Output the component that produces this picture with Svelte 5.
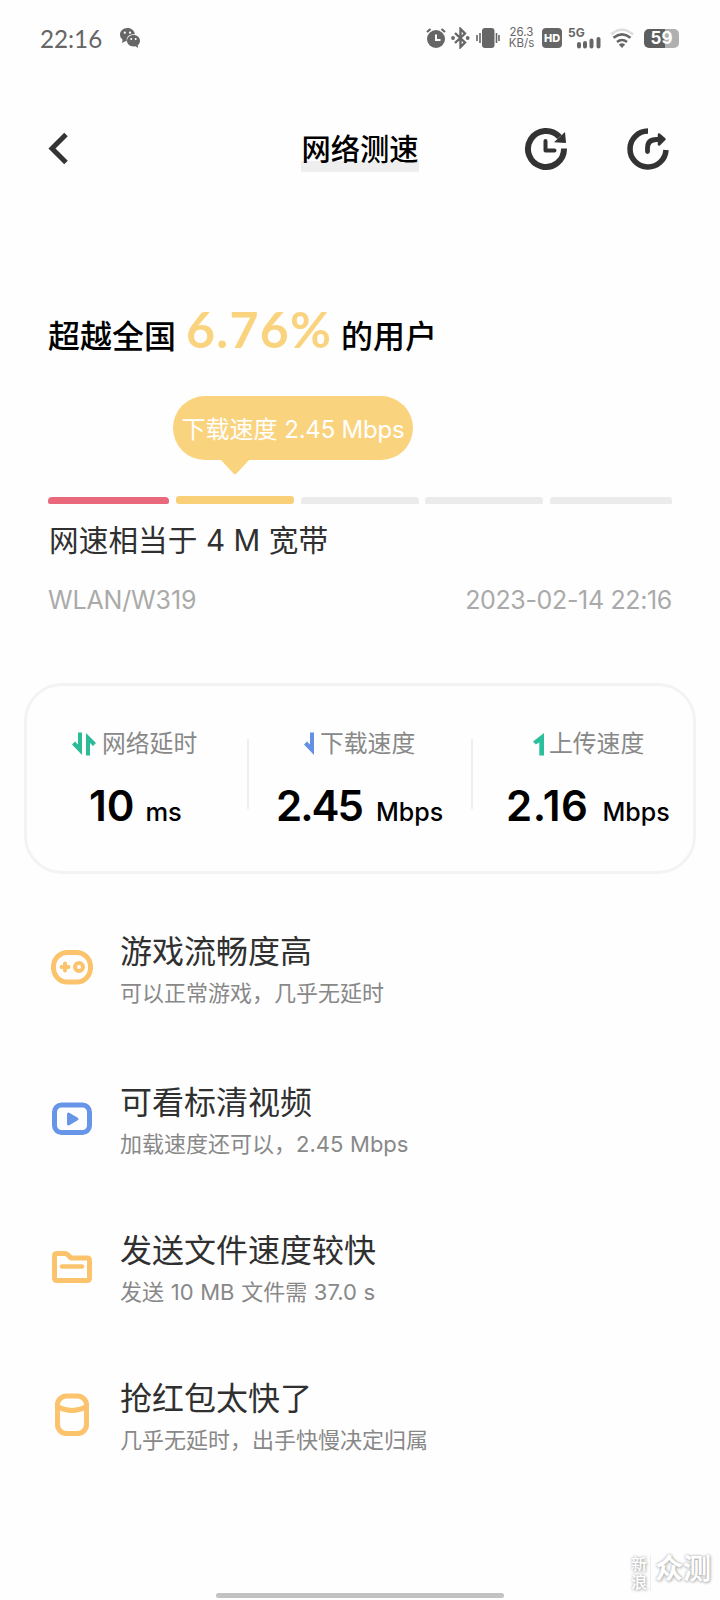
<script lang="ts">
  const status = { time: '22:16', rate: '26.3', rateUnit: 'KB/s', battery: '59' };

  const segments = ['low', 'current', '', '', ''];

  const metrics = [
    { id: 'latency', label: '网络延时', value: '10', unit: 'ms' },
    { id: 'download', label: '下载速度', value: '2.45', unit: 'Mbps' },
    { id: 'upload', label: '上传速度', value: '2.16', unit: 'Mbps' },
  ];

  const results = [
    { icon: 'game', title: '游戏流畅度高', detail: '可以正常游戏，几乎无延时' },
    { icon: 'video', title: '可看标清视频', detail: '加载速度还可以，2.45 Mbps' },
    { icon: 'file', title: '发送文件速度较快', detail: '发送 10 MB 文件需 37.0 s' },
    { icon: 'packet', title: '抢红包太快了', detail: '几乎无延时，出手快慢决定归属' },
  ];
</script>

<div class="screen">
  <div class="status-bar">
    <span class="clock">{status.time}</span>
    <svg class="wechat" width="22" height="22" viewBox="0 0 22 22">
      <path d="M8.500 1C4 1 1 4 1 7.600c0 2.200 1 3.900 2.600 5.100L3 16l3.200-1.700h1.600C7 9.500 10.500 7 16 7.300 15.400 3.500 12.400 1 8.500 1z" fill="#666" />
      <path d="M14.500 8c-3.800 0-6.500 2.600-6.500 5.800s2.700 5.700 6.500 5.700l2-.3 2.700 1.700-.5-2.600c1.500-1 2.300-2.600 2.300-4.500C21 10.600 18.200 8 14.500 8z" fill="#666" />
      <g fill="#fff">
        <circle cx="5.800" cy="5.700" r="1.100" /><circle cx="11" cy="5.700" r="1.100" />
        <circle cx="12.200" cy="12" r="1" /><circle cx="16.700" cy="12" r="1" />
      </g>
    </svg>

    <div class="indicators">
      <svg width="20" height="22" viewBox="0 0 20 22">
        <circle cx="10" cy="12" r="9" fill="#666" />
        <path d="M1 5l3.500-3M19 5l-3.500-3" stroke="#666" stroke-width="2.200" />
        <path d="M10 7.500V13h4.500" stroke="#fff" stroke-width="2" fill="none" />
      </svg>
      <svg class="bluetooth" width="19" height="22" viewBox="0 0 19 22">
        <path d="M4 6l10 9.500-4.500 4.500V2L14 6.500 4 16" stroke="#666" stroke-width="2.400" fill="none" />
        <circle cx="2" cy="11" r="1.900" fill="#666" /><circle cx="16.700" cy="11" r="1.900" fill="#666" />
      </svg>
      <svg class="vibrate" width="24" height="22" viewBox="0 0 24 22">
        <rect x="6" y="1" width="12.500" height="20" rx="3" fill="#666" />
        <path d="M4 6v10M1 8v6M20.500 6v10M23 8v6" stroke="#666" stroke-width="1.600" />
      </svg>
      <div class="rate"><span>{status.rate}</span><span>{status.rateUnit}</span></div>
      <span class="hd">HD</span>
      <svg class="signal" width="34" height="22" viewBox="0 0 34 22">
        <text x="-1" y="10" class="network">5G</text>
        <path d="M10 17v2.500M16 16v3.500M22.500 13.500v6M29.500 12v7.500" stroke="#666" stroke-width="4" stroke-linecap="round" />
      </svg>
      <svg class="wifi" width="24" height="22" viewBox="0 0 24 22" fill="none" stroke-width="2.600">
        <path d="M1 7.500Q12-2 23 7.500" stroke="#ddd" />
        <path d="M3.500 10.800Q12 4 20.500 10.800M7 15Q12 11 17 15" stroke="#666" />
        <path d="M8.800 17.500Q12 15 15.200 17.500L12 21z" fill="#666" />
      </svg>
      <div class="battery"><span>{status.battery}</span></div>
    </div>
  </div>

  <header>
    <svg class="back" width="22" height="34" viewBox="0 0 22 34">
      <path d="M18 2.500L4 16.500l14 14" stroke="#333" stroke-width="5" fill="none" />
    </svg>
    <h1>网络测速</h1>
    <div class="actions">
      <svg width="44" height="44" viewBox="0 0 44 44" fill="none" stroke="#333">
        <path d="M40 21.500A18 18 0 1 1 35.500 10" stroke-width="6" />
        <path d="M41 5l1 11-12-.8z" fill="#333" stroke="none" />
        <path d="M21.500 14v9.500h9" stroke-width="4" stroke-linecap="round" stroke-linejoin="round" />
      </svg>
      <svg width="44" height="44" viewBox="0 0 44 44" fill="none" stroke="#333">
        <path d="M22 4A18 18 0 1 0 40 23" stroke-width="5.500" />
        <path d="M21.500 24.500v-3.500q0-8.500 9-8.500h2" stroke-width="4.800" stroke-linecap="round" />
        <path d="M33 7.500l5.500 4.700-5.500 5.300z" fill="#333" stroke-width="2.500" stroke-linejoin="round" />
      </svg>
    </div>
  </header>

  <section class="summary">
    <p class="rank">超越全国<strong>6.76%</strong>的用户</p>

    <div class="bubble">
      <span>下载速度 <b>2.45 Mbps</b></span>
      <svg width="30" height="16" viewBox="0 0 30 16"><path d="M0 0h30L16.500 14.500q-1.500 1.500-3 0z" fill="#fad37e" /></svg>
    </div>

    <div class="scale">
      {#each segments as level}
        <i class={level}></i>
      {/each}
    </div>

    <p class="bandwidth">网速相当于 4 M 宽带</p>
    <div class="meta">
      <span class="network-name">WLAN/W319</span>
      <span class="date">2023-02-14 22:16</span>
    </div>
  </section>

  <section class="metrics">
    {#each metrics as metric}
      <div class="metric {metric.id}">
        <div class="metric-label">
          {#if metric.id === 'latency'}
            <svg width="24" height="24" viewBox="0 0 24 24" fill="#2bbb97">
              <path d="M6 .5h4v22.500L0 12.500l3-3 3 3zM14 23.500h4V11l3 3 3-3L14 1z" />
            </svg>
          {:else if metric.id === 'download'}
            <svg width="10" height="24" viewBox="0 0 10 24"><path d="M6 .5h4v22.500L0 12.500l3-3 3 3z" fill="#6490e4" /></svg>
          {:else}
            <svg width="11" height="24" viewBox="0 0 11 24"><path d="M6.300 23.500H11V1L0 9.500l2.800 3 3.500-2z" fill="#2bbf9b" /></svg>
          {/if}
          <span>{metric.label}</span>
        </div>
        <div class="metric-value"><strong>{metric.value}</strong><span>{metric.unit}</span></div>
      </div>
    {/each}
  </section>

  <ul class="results">
    {#each results as result}
      <li>
        <svg width="44" height="44" viewBox="0 0 44 44" fill="none" stroke="#fac36c" stroke-width="5" stroke-linecap="round" stroke-linejoin="round">
          {#if result.icon === 'game'}
            <rect x="3.500" y="6.500" width="37" height="29.500" rx="14" />
            <path d="M11.500 21h7M15 17.500v7" stroke-width="4" />
            <circle cx="29" cy="21" r="4" stroke-width="4" />
          {:else if result.icon === 'video'}
            <g stroke="#6795e8">
              <rect x="4.500" y="8" width="35" height="27.500" rx="7" />
              <path d="M18.500 17l8.500 5-8.500 5z" fill="#6795e8" stroke-width="3" />
            </g>
          {:else if result.icon === 'file'}
            <path d="M4.500 33V11q0-2.500 2.500-2.500h8q1.500 0 2.500 1l3.500 3.500h16q2.500 0 2.500 2.500V33q0 2.500-2.500 2.500H7q-2.500 0-2.500-2.500z" />
            <path d="M12 21.500h20" stroke-width="4.500" />
          {:else}
            <rect x="7.500" y="3" width="29" height="37.500" rx="9" />
            <path d="M8 14q14 7 28 0" />
          {/if}
        </svg>
        <div class="result-text">
          <h2>{result.title}</h2>
          <p>{result.detail}</p>
        </div>
      </li>
    {/each}
  </ul>

  <footer>
    <div class="home-bar"></div>
    <div class="watermark">
      <span class="brand">新浪</span>
      <span class="name">众测</span>
    </div>
  </footer>
</div>

<style>
  :global(body) {
    background: #fefefe;
  }

  .screen {
    position: relative;
    width: 720px;
    height: 1600px;
    overflow: hidden;
    color: #303030;
    background: #fefefe;
    font-family: Inter, 'Noto Sans CJK SC', sans-serif;
  }

  h1, h2, p, ul {
    margin: 0;
    padding: 0;
    font-weight: 400;
  }

  svg {
    display: block;
    flex: none;
  }

  .status-bar {
    display: flex;
    align-items: center;
    height: 76px;
    padding: 0 41px 0 40px;
    color: #666;
  }

  .clock {
    width: 79px;
    font: 24.2px/30px Lato, sans-serif;
    padding-top: 1px;
    box-sizing: border-box;
  }

  .indicators {
    display: flex;
    align-items: center;
    margin-left: auto;
  }

  .bluetooth { margin-left: 5px; }
  .vibrate { margin-left: 6px; }

  .rate {
    display: flex;
    flex-direction: column;
    align-items: center;
    width: 27px;
    margin: 0 7px 0 8px;
    font-size: 11.5px;
    line-height: 11px;
  }

  .hd {
    width: 20px;
    height: 20px;
    border-radius: 4px;
    background: #666;
    color: #fff;
    font: 800 11px/20px Inter, sans-serif;
    text-align: center;
  }

  .signal { margin-left: 7px; overflow: visible; }
  .network { font: 700 12px Inter, sans-serif; fill: #666; }
  .wifi { margin-left: 7px; }

  .battery {
    width: 35px;
    height: 19px;
    margin-left: 10px;
    border-radius: 5px;
    background: linear-gradient(90deg, #5e5e5e 59%, #b0b0b0 59%);
    color: #fff;
    font: 700 17px/19px Inter, sans-serif;
    text-align: center;
  }

  header {
    display: grid;
    grid-template-columns: 1fr auto 1fr;
    align-items: center;
    height: 84px;
    margin-top: 31px;
    padding: 0 50px 0 48px;
  }

  h1 {
    position: relative;
    left: 1px;
    padding-top: 1px;
    color: #000;
    background: linear-gradient(#eee, #eee) 0 100% / 100% 11px no-repeat;
    font-size: 29.3px;
    font-weight: 500;
    line-height: 45px;
  }

  .actions {
    display: flex;
    justify-content: flex-end;
    gap: 58px;
  }

  .summary {
    height: 492px;
    padding: 0 48px;
  }

  .rank {
    display: flex;
    align-items: baseline;
    height: 60px;
    padding-top: 108px;
    color: #000;
    font-size: 32px;
    font-weight: 500;
    line-height: 60px;
  }

  .rank strong {
    width: 145px;
    margin: 0 10px;
    color: #fad37e;
    font-family: Lato, sans-serif;
    font-size: 50px;
    font-weight: 700;
    letter-spacing: 1.3px;
  }

  .bubble {
    width: 240px;
    height: 64px;
    margin: 37px 0 0 125px;
    border-radius: 32px;
    background: #fad37e;
    color: #fff;
    font-size: 24px;
    line-height: 67px;
    text-align: center;
    white-space: nowrap;
  }

  .bubble b {
    font-weight: 400;
    letter-spacing: -0.2px;
  }

  .bubble svg {
    margin: -4px 0 0 47px;
  }

  .scale {
    display: grid;
    grid-template-columns: 121px 118px 118px 118px 122px;
    align-items: end;
    justify-content: space-between;
    height: 8px;
    margin-top: 36px;
  }

  .scale i {
    height: 7px;
    border-radius: 3px 3px 1px 1px;
    background: #ebebeb;
  }

  .scale .low { background: #e9687b; border-radius: 4px 4px 2px 2px; }
  .scale .current { height: 8px; background: #f9d078; border-radius: 3px; }

  .bandwidth {
    margin: 14px 0 0 1px;
    font-size: 29.6px;
    letter-spacing: 0.1px;
    line-height: 44px;
  }

  .meta {
    display: flex;
    justify-content: space-between;
    margin-top: 22px;
    color: #aaa;
    font-size: 25px;
    line-height: 33px;
  }

  .network-name { letter-spacing: -0.15px; }
  .date { letter-spacing: -0.35px; }

  .metrics {
    display: grid;
    grid-template-columns: 222px 224px 220px;
    box-sizing: border-box;
    width: 672px;
    height: 191px;
    margin: 0 24px;
    border: 3px solid #f3f3f3;
    border-radius: 38px;
  }

  .metric {
    height: 70px;
    margin-top: 53px;
    border-right: 2px solid #eee;
  }

  .metric:last-child { border-right: 0; }

  .metric-label {
    display: flex;
    align-items: center;
    height: 24px;
    margin-top: -7px;
    color: #888;
    font-size: 23.8px;
    line-height: 24px;
  }

  .latency .metric-label { padding-left: 45px; gap: 6px; }
  .download .metric-label { padding-left: 55px; gap: 6px; }
  .upload .metric-label { padding-left: 60px; gap: 5px; }

  .metric-value {
    display: flex;
    align-items: baseline;
    height: 50px;
    margin-top: 25px;
    color: #000;
    line-height: 50px;
  }

  .metric-value strong { font-size: 42px; font-weight: 600; }
  .metric-value span { font-size: 25px; font-weight: 500; }
  .latency .metric-value { padding-left: 62px; gap: 11px; }
  .latency .metric-value span { font-size: 25.5px; }
  .download .metric-value { padding-left: 27px; gap: 14px; }
  .download strong { letter-spacing: -2px; }
  .upload .metric-value { padding-left: 33px; gap: 14px; }
  .upload strong { letter-spacing: 0.5px; }

  .results {
    display: flex;
    flex-direction: column;
    gap: 60px;
    margin-top: 50px;
    list-style: none;
  }

  .results li {
    display: flex;
    align-items: center;
    gap: 26px;
    height: 88px;
    padding-left: 50px;
  }

  .results li:first-child { margin-bottom: 3px; }

  .result-text { padding-top: 3px; }

  h2 {
    font-size: 32px;
    line-height: 48px;
  }

  .result-text p {
    color: #888;
    font-size: 22px;
    line-height: 35px;
    word-spacing: 0.5px;
  }

  footer {
    display: flex;
    justify-content: center;
  }

  .home-bar {
    position: absolute;
    bottom: 2px;
    left: 216px;
    width: 288px;
    height: 5px;
    border-radius: 3px;
    background: #c2c2c2;
  }

  .watermark {
    position: absolute;
    right: 9px;
    bottom: 9px;
    display: flex;
    gap: 4px;
    color: #fff;
    text-shadow: 0 0 3px #aaa, 1px 1px 3px #bbb;
  }

  .brand {
    width: 17px;
    font-size: 16px;
    font-weight: 500;
    line-height: 18px;
    word-break: break-all;
    border-right: 1px solid #eee;
    padding-right: 2px;
  }

  .name {
    font-size: 28px;
    font-weight: 700;
    line-height: 28px;
  }
</style>
